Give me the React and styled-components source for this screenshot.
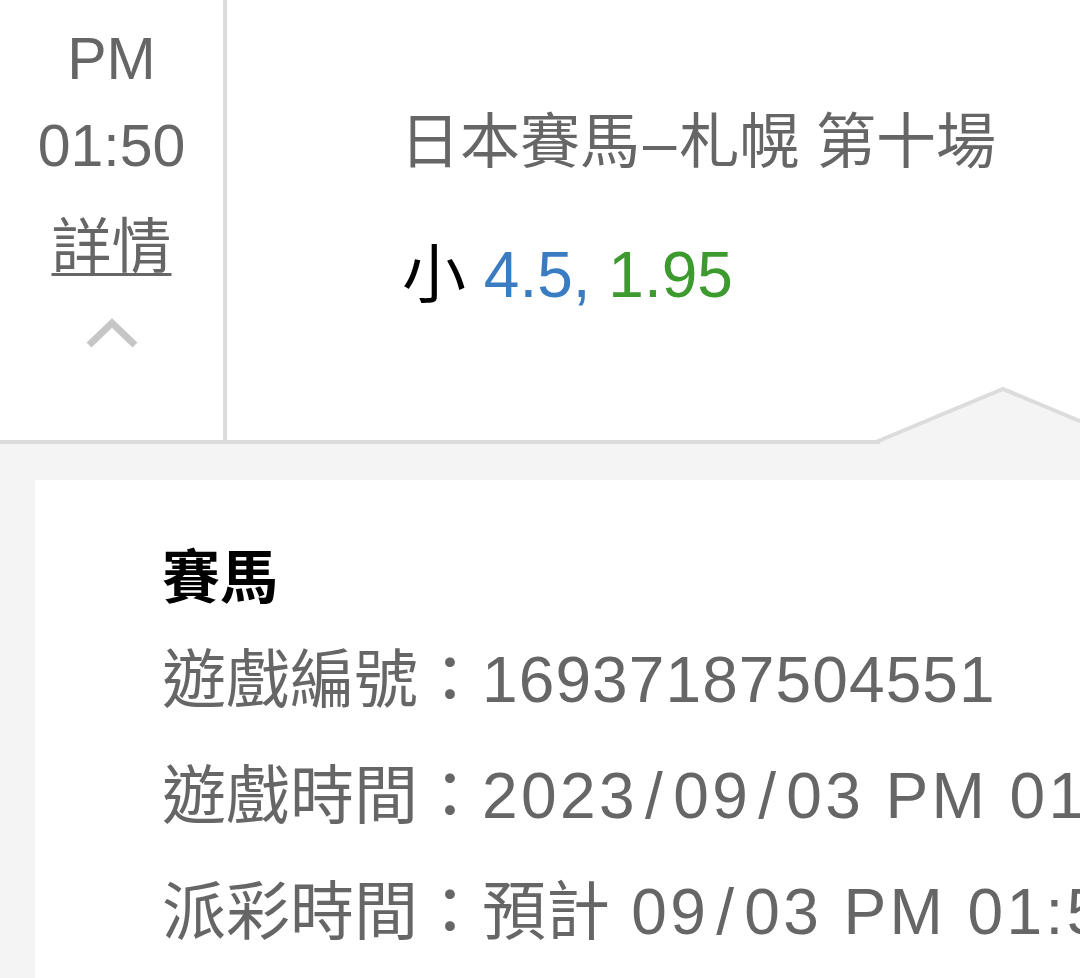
import styled, { createGlobalStyle } from 'styled-components'

const GlobalStyle = createGlobalStyle`
  html, body {
    margin: 0;
    padding: 0;
    background: #f4f4f4;
  }
  body {
    font-family: 'Liberation Sans', 'Noto Sans CJK TC', sans-serif;
    overflow: hidden;
  }
`

const Page = styled.div`
  width: 1080px;
  height: 978px;
  overflow: hidden;
  background: #f4f4f4;
`

const BetRow = styled.div`
  position: relative;
  display: grid;
  grid-template-columns: 227px 1fr;
  height: 440px;
  background: #fff;
  border-bottom: 4px solid #dcdcdc;
`

const TimeCell = styled.div`
  display: flex;
  flex-direction: column;
  align-items: center;
  padding-top: 16px;
  border-right: 4px solid #dcdcdc;
  color: #666;
`

const TimeText = styled.div`
  font-size: 59px;
  line-height: 87px;
  text-align: center;
`

const DetailLink = styled.a`
  margin-top: 14px;
  font-size: 60px;
  line-height: 87px;
  color: #666;
  text-decoration: underline;
  text-decoration-thickness: 3px;
  text-underline-offset: 5px;
`

const Chevron = styled.svg`
  display: block;
  margin-top: 24px;
`

const InfoCell = styled.div`
  padding: 99px 0 0 173px;
`

const RaceTitle = styled.div`
  font-size: 60px;
  line-height: 88px;
  color: #666;
  white-space: nowrap;
`

const Dash = styled.span`
  margin: 0 3px;
`

const BetLine = styled.div`
  margin-top: 44px;
  margin-left: 2px;
  font-size: 64px;
  line-height: 88px;
  color: #000;
  white-space: nowrap;
`

const Odds = styled.span`
  color: ${({ $tone }) => ($tone === 'blue' ? '#3a7cc1' : '#3c9a2e')};
`

const Notch = styled.svg`
  position: absolute;
  left: 880px;
  top: 387px;
  overflow: visible;
`

const DetailArea = styled.div`
  padding: 36px 0 0 35px;
`

const Card = styled.div`
  background: #fff;
  height: 560px;
  padding: 54px 0 0 127px;
  white-space: nowrap;
`

const CardTitle = styled.div`
  font-size: 58px;
  line-height: 88px;
  font-weight: 700;
  color: #000;
`

const InfoRow = styled.div`
  font-size: 64px;
  line-height: 116px;
  color: #666;
`

const Value = styled.span`
  letter-spacing: ${({ $spacing }) => $spacing}px;
`

const Slash = styled.span`
  margin: 0 7px;
`

function withSlashes(text) {
  return text.split('/').flatMap((part, i) =>
    i === 0 ? [part] : [<Slash key={i}>/</Slash>, part]
  )
}

const details = [
  { label: '遊戲編號', value: '16937187504551', spacing: 1.1 },
  { label: '遊戲時間', value: '2023/09/03 PM 01:50', spacing: 3.4 },
  { label: '派彩時間', prefix: '預計', value: ' 09/03 PM 01:55', spacing: 3.4 },
]

export default function App() {
  return (
    <Page>
      <GlobalStyle />
      <BetRow>
        <TimeCell>
          <TimeText>PM</TimeText>
          <TimeText>01:50</TimeText>
          <DetailLink href="#">詳情</DetailLink>
          <Chevron width="52" height="34" viewBox="0 0 52 34">
            <polyline
              points="3,30 26,8 49,30"
              fill="none"
              stroke="#c6c6c6"
              strokeWidth="7"
            />
          </Chevron>
        </TimeCell>
        <InfoCell>
          <RaceTitle>
            日本賽馬<Dash>–</Dash>札幌 第十場
          </RaceTitle>
          <BetLine>
            小 <Odds $tone="blue">4.5,</Odds> <Odds $tone="green">1.95</Odds>
          </BetLine>
        </InfoCell>
        <Notch width="246" height="57" viewBox="0 0 246 57">
          <polygon points="0,55 123,2 246,55 246,58 0,58" fill="#f4f4f4" />
          <polyline
            points="-4,55 123,2 250,55"
            fill="none"
            stroke="#dcdcdc"
            strokeWidth="4"
          />
        </Notch>
      </BetRow>
      <DetailArea>
        <Card>
          <CardTitle>賽馬</CardTitle>
          {details.map((d) => (
            <InfoRow key={d.label}>
              {d.label}：{d.prefix}
              <Value $spacing={d.spacing}>{withSlashes(d.value)}</Value>
            </InfoRow>
          ))}
        </Card>
      </DetailArea>
    </Page>
  )
}
